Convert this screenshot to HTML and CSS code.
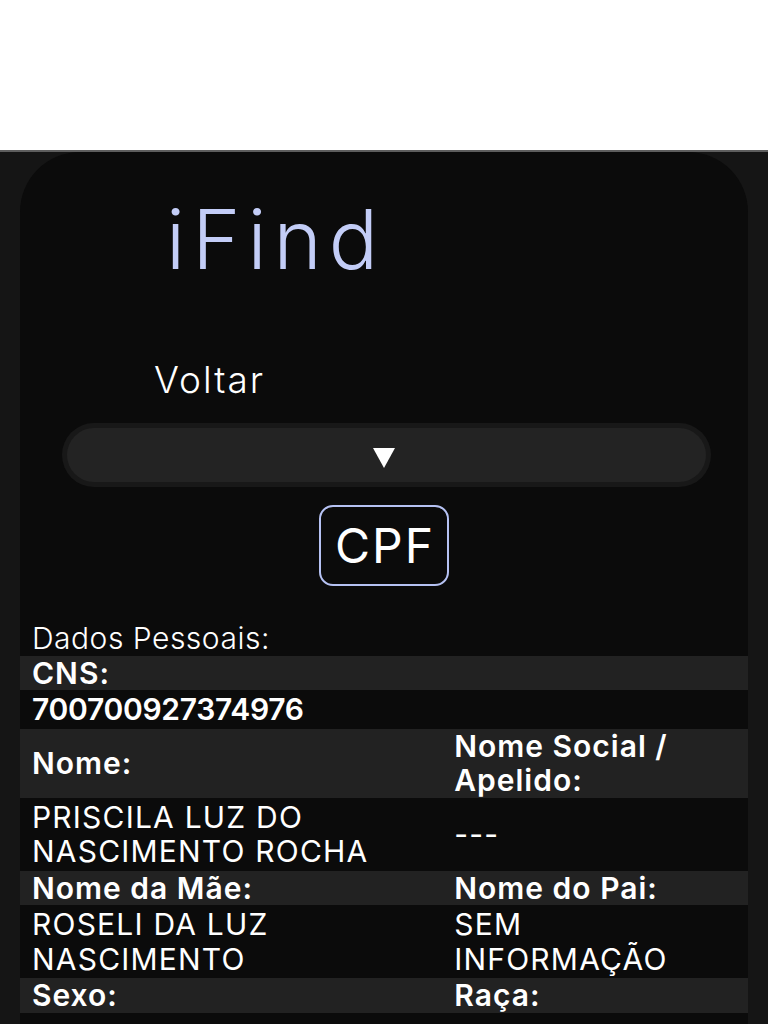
FILE: index.html
```html
<!DOCTYPE html>
<html lang="pt-BR">
<head>
<meta charset="utf-8">
<title>iFind</title>
<link rel="stylesheet" href="styles.css">
</head>
<body>
<div class="top"></div>
<div class="screen">
  <main class="card">
    <h1 class="brand">iFind</h1>
    <a class="back" href="#">Voltar</a>
    <div class="select">
      <div class="select-inner">
        <svg class="arrow" width="22" height="20" viewBox="0 0 22 20"><polygon points="0,0 22,0 11,20" fill="#ffffff"/></svg>
      </div>
    </div>
    <div class="btn-row"><button class="btn-cpf">CPF</button></div>
    <table class="data">
      <colgroup><col class="c1"><col class="c2"></colgroup>
      <tr><td colspan="2" class="caption">Dados Pessoais:</td></tr>
      <tr class="lbl"><th colspan="2">CNS:</th></tr>
      <tr class="val"><td colspan="2" class="strong">700700927374976</td></tr>
      <tr class="lbl"><th>Nome:</th><th>Nome Social / Apelido:</th></tr>
      <tr class="val"><td>PRISCILA LUZ DO NASCIMENTO ROCHA</td><td>---</td></tr>
      <tr class="lbl"><th>Nome da Mãe:</th><th>Nome do Pai:</th></tr>
      <tr class="val"><td>ROSELI DA LUZ NASCIMENTO</td><td>SEM INFORMAÇÃO</td></tr>
      <tr class="lbl"><th>Sexo:</th><th>Raça:</th></tr>
    </table>
  </main>
</div>
</body>
</html>
```
FILE: styles.css
```css
* { box-sizing: border-box; }
html, body { margin: 0; padding: 0; }
body {
  background: #ffffff;
  font-family: "Inter", "Open Sans", sans-serif;
  color: #ffffff;
  overflow: hidden;
}
.top { height: 150px; background: #ffffff; }
.screen {
  background: #151515;
  border-top: 2px solid #5e5e5e;
  padding: 0 20px;
  min-height: 900px;
}
.card {
  background: #0b0b0b;
  border-radius: 60px 60px 0 0;
  padding-top: 47px;
  min-height: 900px;
}
.brand {
  margin: 0;
  padding-left: 146px;
  font-size: 82px;
  line-height: 82px;
  font-weight: 300;
  letter-spacing: 7px;
  color: #c3cdf7;
}
.back {
  display: block;
  margin-top: 80px;
  padding-left: 134px;
  font-size: 37px;
  line-height: 37px;
  font-weight: 300;
  letter-spacing: 2px;
  color: #ffffff;
  text-decoration: none;
}
.select {
  margin: 25px 37px 0 42px;
  height: 64px;
  border-radius: 32px;
  background: #181818;
  padding: 5px;
}
.select-inner {
  height: 100%;
  border-radius: 27px;
  background: #232323;
  display: flex;
  align-items: center;
  justify-content: center;
}
.arrow { display: block; margin: 6px 0 0 -5px; }
.btn-row { display: flex; justify-content: center; margin-top: 18px; }
.btn-cpf {
  font-family: "Inter", "Open Sans", sans-serif;
  font-size: 48px;
  line-height: 48px;
  font-weight: 400;
  letter-spacing: 2px;
  color: #ffffff;
  background: #0b0b0b;
  border: 2px solid #b6c2f3;
  border-radius: 14px;
  padding: 14.5px 12px 14.5px 14px;
}
.data {
  width: 100%;
  border-collapse: collapse;
  margin-top: 35px;
  font-size: 30px;
  line-height: 34.5px;
}
.c1 { width: 58%; }
.c2 { width: 42%; }
.data th, .data td {
  text-align: left;
  vertical-align: middle;
  padding: 0 12px;
}
.caption { font-weight: 300; letter-spacing: 0.5px; }
.lbl { background: #222222; }
.lbl th { font-weight: 600; letter-spacing: 1px; }
.val td { padding-top: 2px; padding-bottom: 2px; font-weight: 400; letter-spacing: 1.2px; }
.val td.strong { font-weight: 600; letter-spacing: -0.3px; }
```
